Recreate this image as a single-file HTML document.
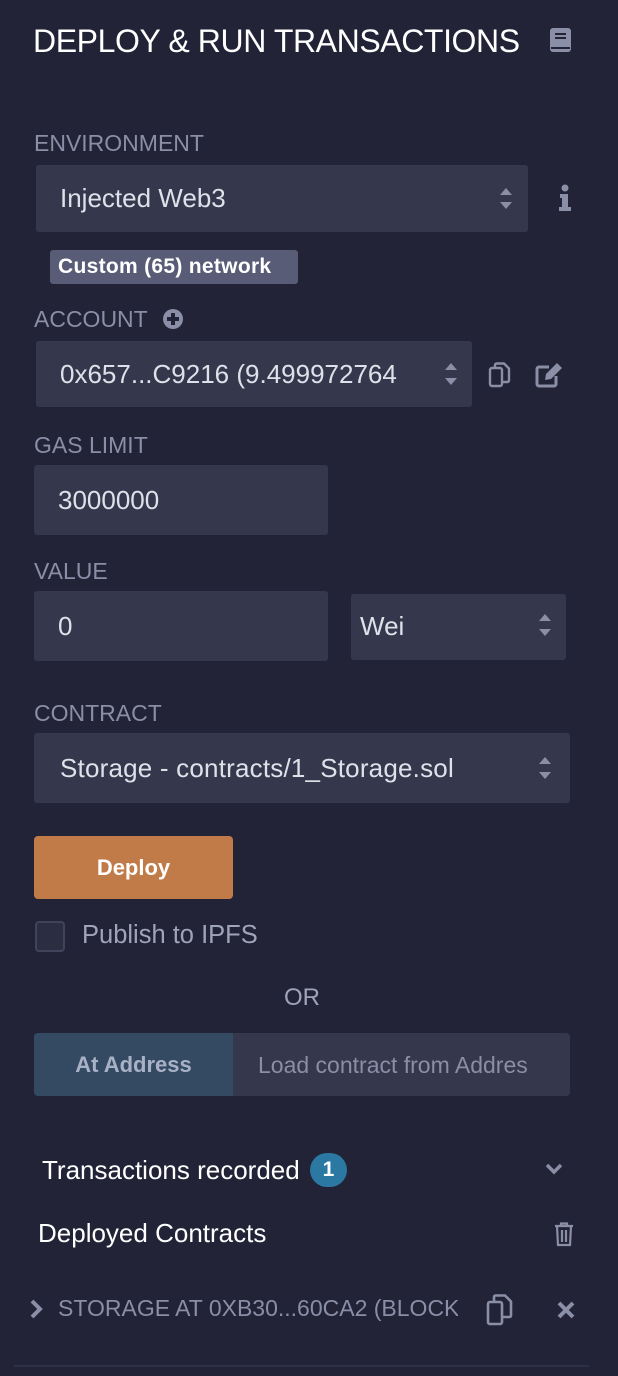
<!DOCTYPE html>
<html><head><meta charset="utf-8"><style>
*{margin:0;padding:0;box-sizing:border-box}
body{width:618px;height:1376px;background:#222336;font-family:"Liberation Sans",sans-serif;position:relative;overflow:hidden;color:#d6d8e2}
.a{position:absolute;white-space:nowrap}
.lbl{color:#8a8ea6;font-size:23px;letter-spacing:0}
.box{position:absolute;background:#35384c;border-radius:3px}
.txt{font-size:26px;color:#dfe1ea;letter-spacing:0}
.arr{position:absolute;width:0;height:0;border-left:6px solid transparent;border-right:6px solid transparent}
svg{position:absolute}
</style></head><body>
<div class="a" style="left:33px;top:23px;font-size:32px;color:#fff;letter-spacing:-0.4px">DEPLOY &amp; RUN TRANSACTIONS</div>
<svg style="left:549px;top:27px" width="24" height="27" viewBox="0 0 24 27"><rect x="1" y="1" width="21" height="24" rx="3" fill="#8a8ea6"/><rect x="6" y="6" width="11" height="2" fill="#222336"/><rect x="6" y="10" width="11" height="2" fill="#222336"/><rect x="2" y="20" width="19" height="2" fill="#222336"/></svg>

<div class="a lbl" style="left:34px;top:130px">ENVIRONMENT</div>
<div class="box" style="left:36px;top:165px;width:492px;height:67px"></div>
<div class="a txt" style="left:60px;top:183px">Injected Web3</div>
<div class="arr" style="left:500px;top:188px;border-bottom:7px solid #8a8ea6"></div>
<div class="arr" style="left:500px;top:202px;border-top:7px solid #8a8ea6"></div>
<svg style="left:558px;top:184px" width="14" height="28" viewBox="0 0 14 28"><circle cx="7" cy="4" r="3.5" fill="#8a8ea6"/><path d="M2 10h8v13h3v4H1v-4h3v-9H2z" fill="#8a8ea6"/></svg>

<div class="a" style="left:50px;top:250px;width:248px;height:34px;background:#595c76;border-radius:3px;color:#fff;font-weight:bold;font-size:21px;line-height:34px;padding-left:8px;letter-spacing:0.3px">Custom (65) network</div>

<div class="a lbl" style="left:34px;top:306px">ACCOUNT</div>
<svg style="left:162px;top:308px" width="22" height="22"><circle cx="11" cy="11" r="10" fill="#8a8ea6"/><rect x="9" y="5" width="4" height="12" fill="#222336"/><rect x="5" y="9" width="12" height="4" fill="#222336"/></svg>
<div class="box" style="left:36px;top:341px;width:436px;height:66px"></div>
<div class="a txt" style="left:60px;top:359px;width:377px;overflow:hidden">0x657...C9216 (9.499972764</div>
<div class="arr" style="left:445px;top:363px;border-bottom:7px solid #8a8ea6"></div>
<div class="arr" style="left:445px;top:378px;border-top:7px solid #8a8ea6"></div>
<svg style="left:488px;top:362px" width="24" height="26" viewBox="0 0 24 26" fill="none" stroke="#8a8ea6" stroke-width="2.4"><rect x="2" y="6" width="12" height="18" rx="2"/><path d="M7 6V3a1.5 1.5 0 0 1 1.5-1.5H16l5 5v12a1.5 1.5 0 0 1-1.5 1.5H14"/></svg>
<svg style="left:535px;top:362px" width="28" height="26" viewBox="0 0 28 26"><path d="M14 5H4a2 2 0 0 0-2 2v15a2 2 0 0 0 2 2h15a2 2 0 0 0 2-2v-8" fill="none" stroke="#8a8ea6" stroke-width="3"/><path d="M10 18l1-6L22 1l5 5-11 11z" fill="#8a8ea6"/></svg>

<div class="a lbl" style="left:34px;top:432px">GAS LIMIT</div>
<div class="box" style="left:34px;top:465px;width:294px;height:70px"></div>
<div class="a txt" style="left:58px;top:485px">3000000</div>

<div class="a lbl" style="left:34px;top:558px">VALUE</div>
<div class="box" style="left:34px;top:591px;width:294px;height:70px"></div>
<div class="a txt" style="left:58px;top:611px">0</div>
<div class="box" style="left:351px;top:594px;width:215px;height:66px"></div>
<div class="a txt" style="left:360px;top:611px">Wei</div>
<div class="arr" style="left:539px;top:614px;border-bottom:7px solid #8a8ea6"></div>
<div class="arr" style="left:539px;top:629px;border-top:7px solid #8a8ea6"></div>

<div class="a lbl" style="left:34px;top:700px">CONTRACT</div>
<div class="box" style="left:34px;top:733px;width:536px;height:70px"></div>
<div class="a txt" style="left:60px;top:753px;letter-spacing:0.2px">Storage - contracts/1_Storage.sol</div>
<div class="arr" style="left:539px;top:757px;border-bottom:7px solid #8a8ea6"></div>
<div class="arr" style="left:539px;top:772px;border-top:7px solid #8a8ea6"></div>

<div class="a" style="left:34px;top:836px;width:199px;height:63px;background:#c17b48;border-radius:4px;color:#fff;font-weight:bold;font-size:22px;line-height:63px;text-align:center">Deploy</div>

<div class="a" style="left:35px;top:921px;width:30px;height:31px;border:2px solid #40435a;border-radius:4px;background:#2b2d40"></div>
<div class="a" style="left:82px;top:921px;font-size:25.5px;color:#a0a4b8">Publish to IPFS</div>

<div class="a" style="left:284px;top:984px;font-size:24px;color:#a0a4b8">OR</div>

<div class="a" style="left:34px;top:1033px;width:536px;height:63px;background:#35384c;border-radius:4px"></div>
<div class="a" style="left:34px;top:1033px;width:199px;height:63px;background:#344a63;border-radius:4px 0 0 4px;color:#a9b1c6;font-weight:bold;font-size:22px;line-height:63px;text-align:center">At Address</div>
<div class="a" style="left:258px;top:1052px;font-size:23px;color:#8a8ea6;width:290px;overflow:hidden">Load contract from Addres</div>

<div class="a" style="left:42px;top:1155px;font-size:26px;color:#fff">Transactions recorded</div>
<div class="a" style="left:310px;top:1153px;width:37px;height:34px;border-radius:17px;background:#2b78a3;color:#fff;font-weight:bold;font-size:21px;text-align:center;line-height:34px">1</div>
<svg style="left:545px;top:1163px" width="18" height="13"><path d="M2 2l7 7 7-7" fill="none" stroke="#8a8ea6" stroke-width="3.5"/></svg>

<div class="a" style="left:38px;top:1218px;font-size:26px;color:#fff">Deployed Contracts</div>
<svg style="left:554px;top:1222px" width="20" height="25" viewBox="0 0 20 25" fill="none" stroke="#8a8ea6" stroke-width="2.2"><path d="M1 4h18M7 4V1.5h6V4M3 4l1 19h12l1-19M8 8v12M12 8v12"/></svg>

<svg style="left:29px;top:1299px" width="14" height="20"><path d="M3 2l8 8-8 8" fill="none" stroke="#8a8ea6" stroke-width="4"/></svg>
<div class="a" style="left:58px;top:1295px;font-size:23px;color:#8a8ea6;width:400px;overflow:hidden">STORAGE AT 0XB30...60CA2 (BLOCK</div>
<svg style="left:486px;top:1294px" width="28" height="32" viewBox="0 0 28 32" fill="none" stroke="#8a8ea6" stroke-width="2.6"><rect x="2" y="8" width="14" height="22" rx="2"/><path d="M8 8V3a1.5 1.5 0 0 1 1.5-1.5H19l6 6v14a1.5 1.5 0 0 1-1.5 1.5H16"/></svg>
<svg style="left:557px;top:1301px" width="18" height="18"><path d="M2 2l14 14M16 2L2 16" stroke="#8a8ea6" stroke-width="4"/></svg>

<div class="a" style="left:14px;top:1365px;width:575px;height:2px;background:#2e3045"></div>
</body></html>
